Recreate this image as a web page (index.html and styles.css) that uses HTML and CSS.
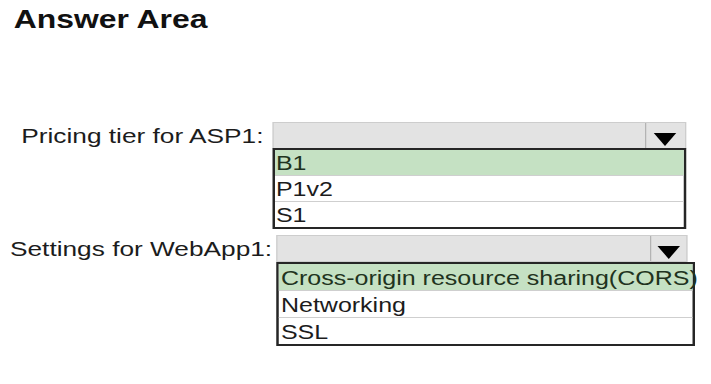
FILE: index.html
```html
<html lang="en">

<head>
    <meta charset="UTF-8">
    <meta name="viewport" content="width=device-width, initial-scale=1.0">
    <title>Answer Area</title>
    <link rel="stylesheet" href="styles.css">
</head>

<body>
    <div class="sheet">
        <h1 class="title">Answer Area</h1>

        <div class="field field-pricing">
            <span class="label">Pricing tier for ASP1:</span>
            <div class="dropdown">
                <div class="select-box">
                    <span class="select-value"></span>
                    <span class="select-arrow"><i class="arrow"></i></span>
                </div>
                <ul class="options">
                    <li class="picked">B1</li>
                    <li>P1v2</li>
                    <li>S1</li>
                </ul>
            </div>
        </div>

        <div class="field field-settings">
            <span class="label">Settings for WebApp1:</span>
            <div class="dropdown">
                <div class="select-box">
                    <span class="select-value"></span>
                    <span class="select-arrow"><i class="arrow"></i></span>
                </div>
                <ul class="options">
                    <li class="picked">Cross-origin resource sharing(CORS)</li>
                    <li>Networking</li>
                    <li>SSL</li>
                </ul>
            </div>
        </div>
    </div>
</body>

</html>
```

FILE: styles.css
```css
body {
    margin: 0;
    background: #fff;
    font-family: "Liberation Sans", Arial, sans-serif;
    color: #1c1c1c;
}

/* the source picture is stretched sideways, so the sheet is too */
.sheet {
    width: 569px;
    transform: scaleX(1.25);
    transform-origin: 0 0;
}

.title {
    margin: 5px 0 0 11px;
    font-size: 25.5px;
    line-height: 29px;
    font-weight: 700;
    color: #111;
}

.field {
    display: flex;
    align-items: flex-start;
    gap: 7px;
}

.field-pricing {
    margin-top: 88px;
    padding-left: 17px;
}

.field-settings {
    margin-top: 6px;
    padding-left: 8px;
    gap: 3px;
}

.label {
    font-size: 21px;
    line-height: 27px;
    white-space: nowrap;
}

.dropdown {
    width: 331px;
}

.select-box {
    display: flex;
    height: 27px;
    box-sizing: border-box;
    border: 1px solid #cdcdcd;
    background-color: #e3e3e3;
}

.select-value {
    flex: 1;
}

.select-arrow {
    display: flex;
    justify-content: center;
    align-items: flex-end;
    width: 31px;
    padding-bottom: 2px;
    border-left: 1px solid #b3b3b3;
}

.arrow {
    width: 0;
    height: 0;
    border-left: 9px solid transparent;
    border-right: 9px solid transparent;
    border-top: 13px solid #000;
}

.options {
    list-style: none;
    margin: -1px 0 0;
    padding: 0;
    border: 2px solid #262626;
    background: #fff;
}

.options li {
    padding: 2px 0 0 1px;
    font-size: 20px;
    line-height: 23px;
    white-space: nowrap;
}

.options li + li {
    border-top: 1px solid #cfcfcf;
}

.options .picked {
    background-color: #c5e1c3;
    color: #1f3320;
}

.field-settings .select-box {
    width: 329px;
}

.field-settings .select-arrow {
    width: 28px;
}

.field-settings .options {
    width: 331px;
    margin-top: 0;
}

.field-settings .options li {
    padding: 3px 0 0 2px;
}
```
